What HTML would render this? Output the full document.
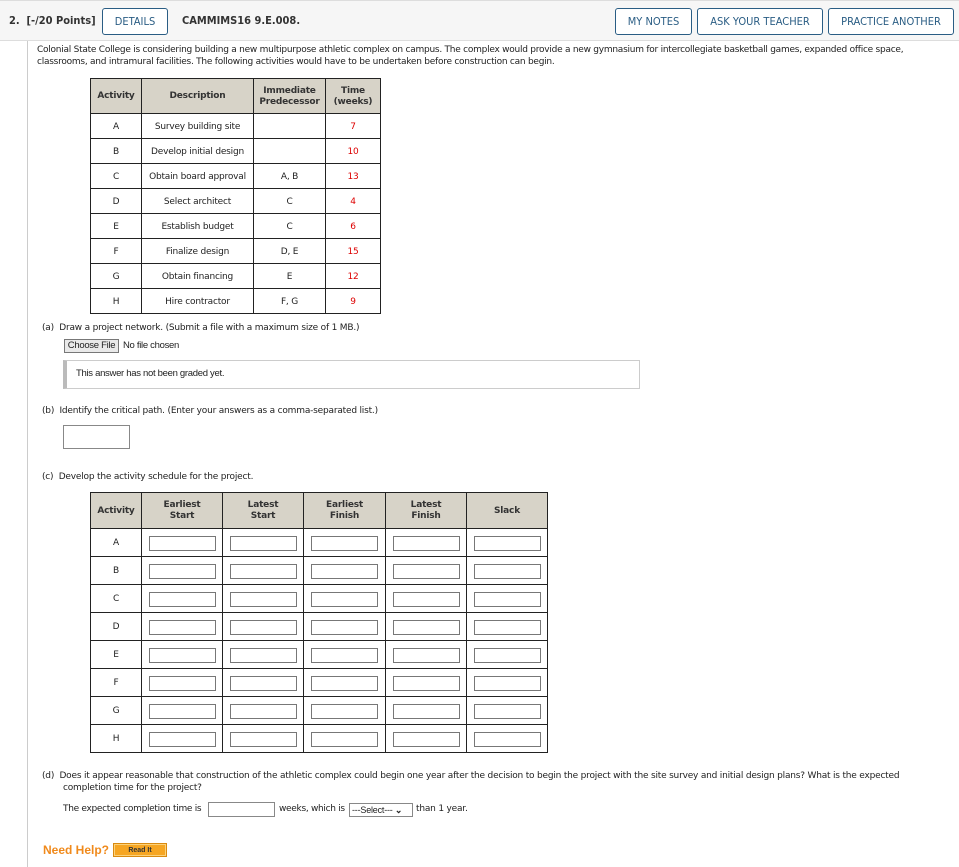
<!DOCTYPE html>
<html><head><meta charset="utf-8"><style>
*{margin:0;padding:0;box-sizing:border-box}
body{width:959px;height:867px;background:#fff;font-family:"DejaVu Sans","Liberation Sans",sans-serif;font-size:9px;color:#222;position:relative;overflow:hidden;letter-spacing:-0.2px}
.hdr{position:absolute;left:0;top:0;width:959px;height:41px;background:#f6f6f6;border-top:1px solid #ddd;border-bottom:1px solid #ddd;letter-spacing:0}
.btn{position:absolute;top:7px;height:27px;border:1px solid #2a5d84;border-radius:3px;color:#2a5d84;font-size:11px;line-height:25px;text-align:center;background:#fff;font-family:"DejaVu Sans Condensed","DejaVu Sans",sans-serif}
.ab{position:absolute;white-space:nowrap}
.vline{position:absolute;left:27px;top:41px;width:1px;height:826px;background:#ccc}
table{position:absolute;border-collapse:collapse}
td,th{border:1.5px solid #222;text-align:center;font-size:9px;padding-top:1px}
th{background:#d7d3c8;font-weight:bold;line-height:11px;color:#333}
.red{color:#d00}
input.t{width:67px;height:15px;border:1px solid #777;display:block;margin:0 auto}
</style></head><body>
<div class="hdr">
<div class="ab" style="left:9px;top:13px;font-size:11px;font-weight:bold;color:#333;font-family:'DejaVu Sans Condensed','DejaVu Sans',sans-serif">2.&nbsp; [-/20 Points]</div>
<div class="btn" style="left:102px;width:66px">DETAILS</div>
<div class="ab" style="left:182px;top:13px;font-size:11px;font-weight:bold;color:#333;font-family:'DejaVu Sans Condensed','DejaVu Sans',sans-serif">CAMMIMS16 9.E.008.</div>
<div class="btn" style="left:615px;width:77px">MY NOTES</div>
<div class="btn" style="left:697px;width:126px">ASK YOUR TEACHER</div>
<div class="btn" style="left:828px;width:126px">PRACTICE ANOTHER</div>
</div>
<div class="vline"></div>
<div class="ab" style="left:37px;top:44px;line-height:12px;width:900px;white-space:normal;letter-spacing:-0.25px">Colonial State College is considering building a new multipurpose athletic complex on campus. The complex would provide a new gymnasium for intercollegiate basketball games, expanded office space, classrooms, and intramural facilities. The following activities would have to be undertaken before construction can begin.</div>

<table style="left:90px;top:78px;width:291px">
<tr style="height:35px"><th style="width:51px">Activity</th><th style="width:112px">Description</th><th style="width:72px">Immediate<br>Predecessor</th><th>Time<br>(weeks)</th></tr>
<tr style="height:25px"><td>A</td><td>Survey building site</td><td></td><td class="red">7</td></tr>
<tr style="height:25px"><td>B</td><td>Develop initial design</td><td></td><td class="red">10</td></tr>
<tr style="height:25px"><td>C</td><td>Obtain board approval</td><td>A, B</td><td class="red">13</td></tr>
<tr style="height:25px"><td>D</td><td>Select architect</td><td>C</td><td class="red">4</td></tr>
<tr style="height:25px"><td>E</td><td>Establish budget</td><td>C</td><td class="red">6</td></tr>
<tr style="height:25px"><td>F</td><td>Finalize design</td><td>D, E</td><td class="red">15</td></tr>
<tr style="height:25px"><td>G</td><td>Obtain financing</td><td>E</td><td class="red">12</td></tr>
<tr style="height:25px"><td>H</td><td>Hire contractor</td><td>F, G</td><td class="red">9</td></tr>
</table>

<div class="ab" style="left:42px;top:323px">(a)&nbsp; Draw a project network. (Submit a file with a maximum size of 1 MB.)</div>
<div class="ab" style="left:64px;top:339px;height:14px;width:55px;border:1px solid #777;background:#e9e9e9;font-family:'Liberation Sans',sans-serif;font-size:9.5px;line-height:12px;text-align:center;letter-spacing:-0.3px">Choose File</div>
<div class="ab" style="left:123px;top:340px;font-family:'Liberation Sans',sans-serif;font-size:9.5px;letter-spacing:-0.3px">No file chosen</div>
<div class="ab" style="left:63px;top:360px;width:577px;height:29px;border:1px solid #ccc;border-left:4px solid #bbb"></div>
<div class="ab" style="left:76px;top:368px;font-family:'Liberation Sans',sans-serif;font-size:9.5px;letter-spacing:-0.3px">This answer has not been graded yet.</div>

<div class="ab" style="left:42px;top:406px">(b)&nbsp; Identify the critical path. (Enter your answers as a comma-separated list.)</div>
<div class="ab" style="left:63px;top:425px;width:67px;height:24px;border:1px solid #888"></div>

<div class="ab" style="left:42px;top:472px">(c)&nbsp; Develop the activity schedule for the project.</div>

<table style="left:90px;top:492px;width:458px">
<tr style="height:36px"><th style="width:51px">Activity</th><th style="width:81px">Earliest<br>Start</th><th style="width:81px">Latest<br>Start</th><th style="width:82px">Earliest<br>Finish</th><th style="width:81px">Latest<br>Finish</th><th>Slack</th></tr>
<tr style="height:28px"><td>A</td><td><input class="t"></td><td><input class="t"></td><td><input class="t"></td><td><input class="t"></td><td><input class="t"></td></tr>
<tr style="height:28px"><td>B</td><td><input class="t"></td><td><input class="t"></td><td><input class="t"></td><td><input class="t"></td><td><input class="t"></td></tr>
<tr style="height:28px"><td>C</td><td><input class="t"></td><td><input class="t"></td><td><input class="t"></td><td><input class="t"></td><td><input class="t"></td></tr>
<tr style="height:28px"><td>D</td><td><input class="t"></td><td><input class="t"></td><td><input class="t"></td><td><input class="t"></td><td><input class="t"></td></tr>
<tr style="height:28px"><td>E</td><td><input class="t"></td><td><input class="t"></td><td><input class="t"></td><td><input class="t"></td><td><input class="t"></td></tr>
<tr style="height:28px"><td>F</td><td><input class="t"></td><td><input class="t"></td><td><input class="t"></td><td><input class="t"></td><td><input class="t"></td></tr>
<tr style="height:28px"><td>G</td><td><input class="t"></td><td><input class="t"></td><td><input class="t"></td><td><input class="t"></td><td><input class="t"></td></tr>
<tr style="height:28px"><td>H</td><td><input class="t"></td><td><input class="t"></td><td><input class="t"></td><td><input class="t"></td><td><input class="t"></td></tr>
</table>

<div class="ab" style="left:42px;top:770px;line-height:12px">(d)&nbsp; Does it appear reasonable that construction of the athletic complex could begin one year after the decision to begin the project with the site survey and initial design plans? What is the expected<br><span style="padding-left:21px">completion time for the project?</span></div>
<div class="ab" style="left:63px;top:804px;letter-spacing:-0.3px">The expected completion time is</div>
<div class="ab" style="left:208px;top:802px;width:67px;height:15px;border:1px solid #888"></div>
<div class="ab" style="left:279px;top:804px;letter-spacing:-0.3px">weeks, which is</div>
<div class="ab" style="left:349px;top:803px;width:64px;height:14px;border:1px solid #888;font-family:'Liberation Sans',sans-serif;font-size:9px;line-height:12px;padding-left:2px">---Select--- <span style="font-weight:bold">&#8964;</span></div>
<div class="ab" style="left:416px;top:804px">than 1 year.</div>

<div class="ab" style="left:43px;top:843px;font-family:'Liberation Sans',sans-serif;font-size:12px;font-weight:bold;color:#f08a1c;letter-spacing:0">Need Help?</div>
<div class="ab" style="left:113px;top:843px;width:54px;height:14px;background:#f6a623;border:1px solid #d98a10;box-shadow:inset 0 0 0 1px #fcd27a;font-family:'Liberation Sans',sans-serif;font-size:7px;font-weight:bold;text-align:center;line-height:14px;color:#333;letter-spacing:0">Read It</div>
</body></html>
